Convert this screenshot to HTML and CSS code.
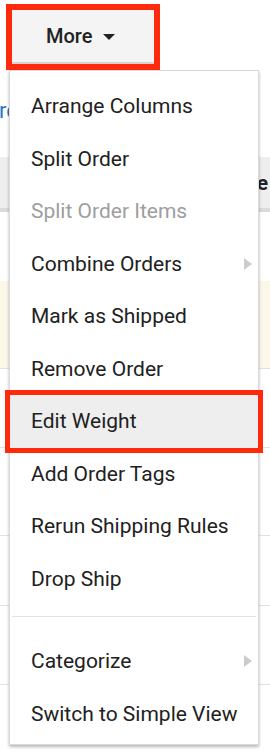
FILE: index.html
```html
<!DOCTYPE html>
<html lang="en">
<head>
<meta charset="utf-8">
<title>More menu</title>
<link rel="stylesheet" href="styles.css">
</head>
<body>
<div class="page">
  <div class="toolbar">
    <button class="more-btn" type="button">
      <span class="more-label">More</span>
      <span class="caret"></span>
    </button>
  </div>
  <div class="link-row"><a class="link" href="#">re</a></div>
  <div class="table">
    <div class="thead"><span class="th">Size</span></div>
    <div class="row row-a"></div>
    <div class="row row-warn"></div>
    <div class="row row-b"></div>
    <div class="row row-c"></div>
    <div class="row row-d"></div>
    <div class="row row-b"></div>
    <div class="row row-e"></div>
  </div>

  <div class="menu">
    <div class="item">Arrange Columns</div>
    <div class="item">Split Order</div>
    <div class="item disabled">Split Order Items</div>
    <div class="item has-sub">Combine Orders<span class="sub-arrow"></span></div>
    <div class="item">Mark as Shipped</div>
    <div class="item">Remove Order</div>
    <div class="item highlighted">Edit Weight</div>
    <div class="item">Add Order Tags</div>
    <div class="item">Rerun Shipping Rules</div>
    <div class="item">Drop Ship</div>
    <div class="separator"></div>
    <div class="item has-sub">Categorize<span class="sub-arrow"></span></div>
    <div class="item">Switch to Simple View</div>
  </div>
</div>
</body>
</html>
```
FILE: styles.css
```css
* { box-sizing: border-box; }

html, body {
  margin: 0;
  padding: 0;
  background: #ffffff;
}

body {
  font-family: Roboto, "Noto Sans", "Liberation Sans", sans-serif;
  color: #212121;
  width: 270px;
  height: 754px;
  overflow: hidden;
}

.page {
  position: relative;
  width: 270px;
  height: 754px;
  overflow: hidden;
}

/* toolbar */
.toolbar {
  height: 70px;
  padding: 4px 0 0 6px;
}

.more-btn {
  display: flex;
  align-items: center;
  width: 154px;
  height: 66px;
  margin: 0;
  padding: 0 0 2px 34px;
  border: 6px solid #ff2a0c;
  background: #f4f4f4;
  box-shadow: inset 0 -2px 0 #d4d4d4;
  font-family: Roboto, "Noto Sans", "Liberation Sans", sans-serif;
  font-size: 20px;
  font-weight: 500;
  color: #222222;
  gap: 11px;
  cursor: pointer;
}

.caret {
  width: 0;
  height: 0;
  border-left: 6px solid transparent;
  border-right: 6px solid transparent;
  border-top: 6px solid #222222;
  margin-top: 2px;
}

/* background page */
.link-row {
  height: 87px;
  display: flex;
  align-items: center;
  padding-bottom: 6px;
}

.link {
  color: #1f7bc6;
  font-size: 22px;
  text-decoration: none;
  margin-left: -1px;
}

.thead {
  height: 55px;
  background: #eeeeee;
  border-bottom: 4px solid #dadada;
  display: flex;
  align-items: center;
  justify-content: flex-end;
  padding-right: 2px;
}

.th {
  font-weight: 700;
  font-size: 21px;
  color: #222222;
}

.row {
  border-bottom: 1px solid #e2e2e2;
}

.row-a { height: 69px; border-bottom: none; }
.row-warn { height: 88px; background: #fcf8e9; }
.row-b { height: 79px; }
.row-c { height: 88px; }
.row-d { height: 70px; }
.row-e { height: 80px; border-bottom: none; }

/* dropdown menu */
.menu {
  position: absolute;
  top: 70px;
  left: 9px;
  width: 250px;
  height: 675px;
  background: #ffffff;
  border: 1px solid #dadada;
  box-shadow: 0 2px 3px rgba(0, 0, 0, 0.28);
  padding: 9px 0 4px;
  display: flex;
  flex-direction: column;
}

.item {
  height: 52.5px;
  flex: 0 0 52.5px;
  display: flex;
  align-items: center;
  justify-content: space-between;
  padding: 0 6px 0 21px;
  font-size: 21px;
  color: #212121;
  white-space: nowrap;
}

.item.disabled {
  color: #9e9e9e;
}

.item.highlighted {
  background: #eeeeee;
  outline: 5px solid #ff2a0c;
}

.sub-arrow {
  width: 0;
  height: 0;
  border-top: 6.5px solid transparent;
  border-bottom: 6.5px solid transparent;
  border-left: 8px solid #cccccc;
}

.separator {
  flex: 0 0 1px;
  height: 1px;
  margin: 11px 2px 18px;
  background: #e2e2e2;
}
```
